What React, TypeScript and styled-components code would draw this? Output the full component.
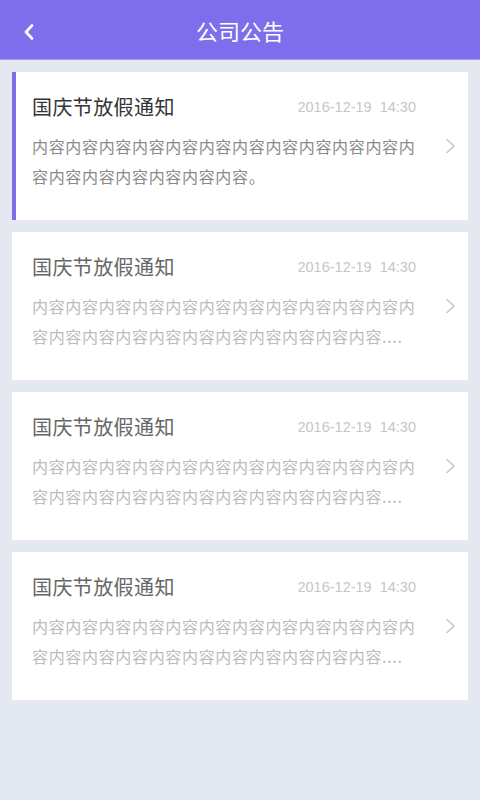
import React from "react";
import styled, { createGlobalStyle } from "styled-components";

const GlobalStyle = createGlobalStyle`
  html, body {
    margin: 0;
    padding: 0;
    background: #e4e8f0;
  }
  body {
    font-family: "Noto Sans CJK SC", "Liberation Sans", sans-serif;
  }
`;

const Page = styled.div`
  width: 480px;
  min-height: 800px;
  background: #e4e8f0;
`;

const Header = styled.header`
  height: 59px;
  background: #7f6eeb;
  border-bottom: 1px solid #a99ef2;
  display: flex;
  align-items: center;
  justify-content: center;
  position: relative;
`;

const BackButton = styled.button`
  position: absolute;
  left: 18px;
  top: 20px;
  width: 22px;
  height: 24px;
  padding: 0;
  border: 0;
  background: none;
  display: flex;
  align-items: center;
  justify-content: center;
`;

const Title = styled.h1`
  margin: 0;
  color: #fff;
  font-size: 22px;
  font-weight: 400;
  line-height: 1;
  letter-spacing: 0;
`;

const List = styled.div`
  display: flex;
  flex-direction: column;
  gap: 12px;
  padding: 12px;
`;

const Card = styled.div<{ $active?: boolean }>`
  height: 148px;
  box-sizing: border-box;
  background: #fff;
  display: flex;
  align-items: flex-start;
  padding: 21px 11px 0 ${(p) => (p.$active ? 16 : 20)}px;
  border-left: ${(p) => (p.$active ? "4px solid #7f6eeb" : "none")};
`;

const Body = styled.div`
  width: 385px;
  display: flex;
  flex-direction: column;
`;

const TitleRow = styled.div`
  display: flex;
  align-items: center;
  justify-content: space-between;
  height: 28px;
`;

const NoticeTitle = styled.span<{ $active?: boolean }>`
  font-size: 20px;
  letter-spacing: 0.4px;
  color: ${(p) => (p.$active ? "#333" : "#666")};
  line-height: 28px;
`;

const Time = styled.span`
  font-family: "Liberation Sans", sans-serif;
  font-size: 14.5px;
  color: #c6c6c6;
  white-space: pre;
  padding-right: 1px;
`;

const Content = styled.p<{ $active?: boolean }>`
  margin: 10px 0 0;
  font-size: 16px;
  letter-spacing: 0.67px;
  line-height: 30px;
  color: ${(p) => (p.$active ? "#8a8a8a" : "#bcbcbc")};
  word-break: break-all;
`;

const Arrow = styled.div`
  margin-left: auto;
  align-self: center;
  margin-top: -21px;
  display: flex;
`;

const notices = [
  { title: "国庆节放假通知", time: "2016-12-19  14:30", text: "内容".repeat(18) + "。", active: true },
  { title: "国庆节放假通知", time: "2016-12-19  14:30", text: "内容".repeat(22) + "....", active: false },
  { title: "国庆节放假通知", time: "2016-12-19  14:30", text: "内容".repeat(22) + "....", active: false },
  { title: "国庆节放假通知", time: "2016-12-19  14:30", text: "内容".repeat(22) + "....", active: false },
];

function App() {
  return (
    <Page>
      <GlobalStyle />
      <Header>
        <BackButton aria-label="返回">
          <svg width="12" height="16" viewBox="0 0 12 16">
            <path d="M9 1.5 L3 8 L9 14.5" fill="none" stroke="#fff" strokeWidth="2.6" strokeLinecap="round" strokeLinejoin="round" />
          </svg>
        </BackButton>
        <Title>公司公告</Title>
      </Header>
      <List>
        {notices.map((n, i) => (
          <Card key={i} $active={n.active}>
            <Body>
              <TitleRow>
                <NoticeTitle $active={n.active}>{n.title}</NoticeTitle>
                <Time>{n.time}</Time>
              </TitleRow>
              <Content $active={n.active}>{n.text}</Content>
            </Body>
            <Arrow>
              <svg width="12" height="16" viewBox="0 0 12 16">
                <path d="M2 1.5 L9 8 L2 14.5" fill="none" stroke="#c8c8c8" strokeWidth="1.6" strokeLinecap="round" strokeLinejoin="round" />
              </svg>
            </Arrow>
          </Card>
        ))}
      </List>
    </Page>
  );
}

export default App;
